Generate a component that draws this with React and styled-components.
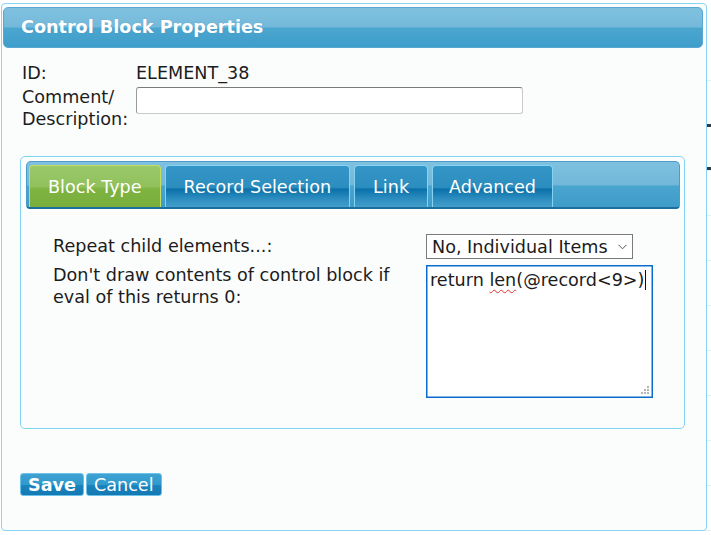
import React from "react";
import styled, { createGlobalStyle } from "styled-components";

const Global = createGlobalStyle`
  html, body { margin: 0; padding: 0; background: #ffffff; }
  body { font-family: "DejaVu Sans", Verdana, sans-serif; color: #1c1c1c; }
  * { box-sizing: border-box; }
`;

const FONT = "17.6px";

const Page = styled.div`
  position: relative;
  width: 711px;
  height: 535px;
  overflow: hidden;
  background: #ffffff;
`;

/* underlying page table, visible only around the modal */
const Backdrop = styled.div`
  display: grid;
  grid-template-columns: repeat(7, 104px);
  grid-auto-rows: 45px;
  margin: 0 0 0 4px;
  padding-top: 36px;
`;

const Cell = styled.div`
  border-left: 1px solid #d3e4ea;
  border-bottom: 1px solid #e3eef2;
`;

const SideMark = styled.div`
  position: absolute;
  right: 0;
  top: ${(p) => p.$top}px;
  width: 4px;
  height: 3px;
  background: #2e3a44;
`;

const Dialog = styled.div`
  position: absolute;
  left: 1px;
  top: 3px;
  width: 706px;
  height: 528px;
  border: 1px solid #86d5f2;
  border-radius: 4px;
  background: #fbfdfd;
  padding: 3px 3px 0 1px;
  display: flex;
  flex-direction: column;
`;

const Header = styled.div`
  height: 41px;
  border-radius: 5px;
  border: 1px solid #5aa7d2;
  background: linear-gradient(
    to bottom,
    #80c1df 0%,
    #74b9da 48%,
    #4ba6cf 52%,
    #3f9dca 100%
  );
  color: #ffffff;
  font-weight: bold;
  font-size: ${FONT};
  line-height: 39px;
  padding-left: 17px;
  text-shadow: 0 0 1px rgba(40, 110, 160, 0.35);
`;

const Fields = styled.div`
  display: grid;
  grid-template-columns: 114px 387px;
  row-gap: 2px;
  padding: 14px 0 0 19px;
  font-size: ${FONT};
  line-height: 22px;
`;

const Label = styled.div``;

const Value = styled.div``;

const TextInput = styled.input`
  margin-top: 1px;
  width: 387px;
  height: 27px;
  border: 1px solid #c9c9c9;
  border-top-color: #7a7a7a;
  border-left-color: #9a9a9a;
  border-radius: 3px;
  background: #ffffff;
  font: inherit;
`;

const Panel = styled.div`
  margin: 26px 18px 0 17px;
  height: 273px;
  border: 1px solid #82d4f3;
  border-radius: 5px;
  padding: 4px 4px 0 5px;
  background: #fbfdfd;
`;

const TabBar = styled.div`
  display: flex;
  align-items: flex-end;
  gap: 4px;
  height: 48px;
  padding: 0 2px;
  border: 1px solid #4c9bcb;
  border-bottom: 2px solid #1c6e9f;
  border-radius: 5px 5px 4px 4px;
  background: linear-gradient(
    to bottom,
    #7fc0df 0%,
    #72b8d9 50%,
    #4aa5ce 54%,
    #3e9cc9 100%
  );
`;

const Tab = styled.div`
  height: 42px;
  padding: 0 ${(p) => p.$pad}px;
  border: 1px solid ${(p) => (p.$active ? "#c3dd63" : "#86d2f2")};
  border-bottom: none;
  border-radius: 4px 4px 0 0;
  color: #ffffff;
  font-size: ${FONT};
  line-height: 42px;
  white-space: nowrap;
  background: ${(p) =>
    p.$active
      ? "linear-gradient(to bottom, #9ac86a 0%, #91c15c 50%, #7eb342 56%, #78ae3a 100%)"
      : "linear-gradient(to bottom, #3496c6 0%, #2c8dbf 52%, #0b71a9 57%, #2a8bbe 78%, #439fcb 100%)"};
`;

const TabBody = styled.div`
  display: grid;
  grid-template-columns: 373px auto;
  row-gap: 5px;
  padding: 26px 0 0 27px;
  font-size: ${FONT};
  line-height: 22px;
`;

const SelectWrap = styled.div`
  position: relative;
  width: 207px;
  margin-top: -1px;
`;

const Select = styled.select`
  appearance: none;
  width: 207px;
  height: 25px;
  border: 1px solid #7a7a7a;
  border-radius: 0;
  background: #ffffff;
  font: inherit;
  font-size: ${FONT};
  color: #1c1c1c;
  padding: 0 0 0 5px;
  outline: none;
`;

const Chevron = styled.svg`
  position: absolute;
  right: 6px;
  top: 10px;
  pointer-events: none;
`;

const CodeBox = styled.div`
  position: relative;
  width: 227px;
  height: 133px;
  margin-top: 1px;
  border: 1px solid #0a6ccc;
  box-shadow: inset 0 0 0 0.5px #0a6ccc;
  background: #ffffff;
  padding: 3px 3px;
  font-size: ${FONT};
  line-height: 22px;
  color: #1c1c1c;
  white-space: nowrap;
`;

const Misspelled = styled.span`
  text-decoration: underline wavy #e0302a;
  text-decoration-thickness: 1px;
  text-underline-offset: 3px;
`;

const Caret = styled.span`
  display: inline-block;
  width: 1px;
  height: 20px;
  margin-left: 1px;
  vertical-align: -4px;
  background: #111;
`;

const Grip = styled.svg`
  position: absolute;
  right: 2px;
  bottom: 2px;
`;

const Buttons = styled.div`
  display: flex;
  gap: 2px;
  margin: 44px 0 0 17px;
`;

const Button = styled.button`
  height: 23px;
  padding: 0 7px;
  border: 1px solid #6cc2e9;
  border-radius: 3px;
  background: linear-gradient(
    to bottom,
    #3ea2d2 0%,
    #3099cc 50%,
    #1a82bc 55%,
    #1379b3 100%
  );
  color: #ffffff;
  font-family: inherit;
  font-size: ${FONT};
  font-weight: ${(p) => (p.$primary ? "bold" : "normal")};
  line-height: 20px;
  cursor: pointer;
`;

const tabs = [
  { label: "Block Type", pad: 18 },
  { label: "Record Selection", pad: 18 },
  { label: "Link", pad: 18 },
  { label: "Advanced", pad: 16 },
];

export default function App() {
  return (
    <Page>
      <Global />
      <Backdrop>
        {Array.from({ length: 7 * 11 }).map((_, i) => (
          <Cell key={i} />
        ))}
      </Backdrop>
      <SideMark $top={124} />
      <SideMark $top={167} />
      <Dialog>
        <Header>Control Block Properties</Header>
        <Fields>
          <Label>ID:</Label>
          <Value>ELEMENT_38</Value>
          <Label>
            Comment/
            <br />
            Description:
          </Label>
          <Value>
            <TextInput type="text" />
          </Value>
        </Fields>
        <Panel>
          <TabBar>
            {tabs.map((t, i) => (
              <Tab key={t.label} $active={i === 0} $pad={t.pad}>
                {t.label}
              </Tab>
            ))}
          </TabBar>
          <TabBody>
            <Label>Repeat child elements...:</Label>
            <SelectWrap>
              <Select defaultValue="no">
                <option value="no">No, Individual Items</option>
              </Select>
              <Chevron width="9" height="6" viewBox="0 0 9 6">
                <path d="M0.5 0.8 L4.5 4.8 L8.5 0.8" fill="none" stroke="#555" strokeWidth="1" />
              </Chevron>
            </SelectWrap>
            <Label>
              Don't draw contents of control block if
              <br />
              eval of this returns 0:
            </Label>
            <CodeBox role="textbox">
              return <Misspelled>len</Misspelled>(@record&lt;9&gt;)
              <Caret />
              <Grip width="9" height="9" viewBox="0 0 9 9">
                <rect x="6" y="0" width="2" height="2" fill="#b5b5b5" />
                <rect x="3" y="3" width="2" height="2" fill="#b5b5b5" />
                <rect x="6" y="3" width="2" height="2" fill="#b5b5b5" />
                <rect x="0" y="6" width="2" height="2" fill="#b5b5b5" />
                <rect x="3" y="6" width="2" height="2" fill="#b5b5b5" />
                <rect x="6" y="6" width="2" height="2" fill="#b5b5b5" />
              </Grip>
            </CodeBox>
          </TabBody>
        </Panel>
        <Buttons>
          <Button $primary>Save</Button>
          <Button>Cancel</Button>
        </Buttons>
      </Dialog>
    </Page>
  );
}
